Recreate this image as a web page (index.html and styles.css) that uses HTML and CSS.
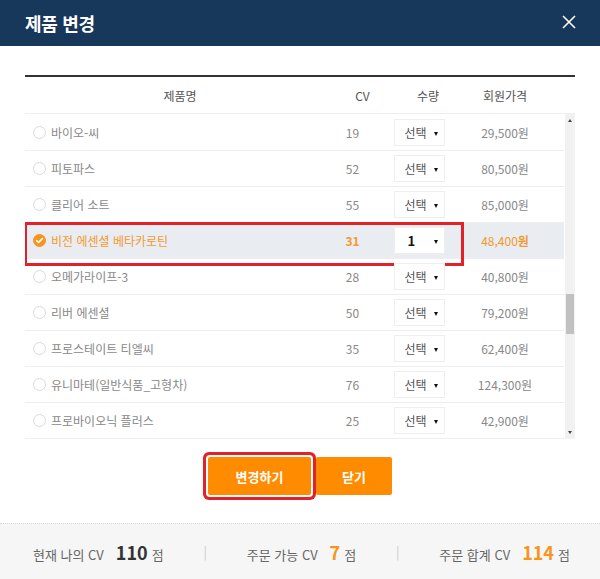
FILE: index.html
```html
<!DOCTYPE html>
<html lang="ko">
<head>
<meta charset="utf-8">
<title>제품 변경</title>
<link rel="stylesheet" href="styles.css">
</head>
<body>
<div class="modal">
  <header class="modal-head">
    <h1 class="modal-title">제품 변경</h1>
    <button class="close" aria-label="닫기">
      <svg width="14" height="14" viewBox="0 0 14 14"><path d="M1 1L13 13M13 1L1 13" stroke="#fff" stroke-width="1.6" fill="none"/></svg>
    </button>
  </header>
  <div class="modal-body">
    <div class="table">
      <div class="thead">
        <span>제품명</span><span>CV</span><span>수량</span><span>회원가격</span>
      </div>
      <div class="tbody">
        <div class="list">
          <div class="row"><span class="name"><i class="radio"></i>바이오-씨</span><span class="cv">19</span><span class="qty"><span class="select">선택<i class="caret"></i></span></span><span class="price">29,500원</span></div>
          <div class="row"><span class="name"><i class="radio"></i>피토파스</span><span class="cv">52</span><span class="qty"><span class="select">선택<i class="caret"></i></span></span><span class="price">80,500원</span></div>
          <div class="row"><span class="name"><i class="radio"></i>클리어 소트</span><span class="cv">55</span><span class="qty"><span class="select">선택<i class="caret"></i></span></span><span class="price">85,000원</span></div>
          <div class="row selected"><span class="name"><i class="radio checked"><svg width="13" height="13" viewBox="0 0 13 13"><path d="M3.6 6.6L5.6 8.5L9.4 4.6" stroke="#fff" stroke-width="1.6" fill="none" stroke-linecap="round" stroke-linejoin="round"/></svg></i>비전 에센셜 베타카로틴</span><span class="cv">31</span><span class="qty"><span class="select value">1<i class="caret"></i></span></span><span class="price">48,400<b>원</b></span></div>
          <div class="row"><span class="name"><i class="radio"></i>오메가라이프-3</span><span class="cv">28</span><span class="qty"><span class="select">선택<i class="caret"></i></span></span><span class="price">40,800원</span></div>
          <div class="row"><span class="name"><i class="radio"></i>리버 에센셜</span><span class="cv">50</span><span class="qty"><span class="select">선택<i class="caret"></i></span></span><span class="price">79,200원</span></div>
          <div class="row"><span class="name"><i class="radio"></i>프로스테이트 티엘씨</span><span class="cv">35</span><span class="qty"><span class="select">선택<i class="caret"></i></span></span><span class="price">62,400원</span></div>
          <div class="row"><span class="name"><i class="radio"></i>유니마테(일반식품_고형차)</span><span class="cv">76</span><span class="qty"><span class="select">선택<i class="caret"></i></span></span><span class="price">124,300원</span></div>
          <div class="row"><span class="name"><i class="radio"></i>프로바이오닉 플러스</span><span class="cv">25</span><span class="qty"><span class="select">선택<i class="caret"></i></span></span><span class="price">42,900원</span></div>
        </div>
        <div class="scrollbar">
          <i class="arrow up"></i>
          <div class="track"><div class="thumb"></div></div>
          <i class="arrow down"></i>
        </div>
      </div>
    </div>
    <div class="actions">
      <button class="btn btn-primary">변경하기</button>
      <button class="btn">닫기</button>
    </div>
  </div>
  <footer class="summary">
    <div class="stat"><span class="label">현재 나의 CV</span><strong class="num">110</strong><span class="unit">점</span></div>
    <span class="sep">|</span>
    <div class="stat"><span class="label">주문 가능 CV</span><strong class="num accent">7</strong><span class="unit">점</span></div>
    <span class="sep">|</span>
    <div class="stat"><span class="label">주문 합계 CV</span><strong class="num accent">114</strong><span class="unit">점</span></div>
  </footer>
</div>
</body>
</html>
```

FILE: styles.css
```css
* { box-sizing: border-box; }
html, body {
  margin: 0;
  padding: 0;
  background: #fff;
  font-family: "Noto Sans CJK KR", "Noto Sans", sans-serif;
}
.modal {
  width: 600px;
  height: 579px;
  display: flex;
  flex-direction: column;
  overflow: hidden;
}
.modal-head {
  height: 46px;
  background: #17375b;
  display: flex;
  align-items: center;
  justify-content: space-between;
  padding: 0 24px 0 25px;
  flex: none;
}
.modal-title {
  margin: 0;
  color: #fff;
  font-size: 18px;
  font-weight: 700;
  letter-spacing: -0.3px;
}
.close {
  background: none;
  border: 0;
  padding: 0;
  width: 14px;
  height: 14px;
  display: flex;
  margin-top: -2px;
}
.modal-body {
  padding: 29px 25px 0;
  flex: none;
}
.table {
  border-top: 2px solid #333;
}
.thead {
  display: grid;
  grid-template-columns: 310px 55px 76px 78px 1fr;
  height: 37px;
  align-items: center;
  border-bottom: 1px solid #eee;
  font-size: 12px;
  color: #555;
}
.thead span { text-align: center; }
.tbody {
  display: flex;
  height: 325px;
  gap: 1px;
}
.list {
  width: 539px;
  overflow: hidden;
  padding-top: 1px;
}
.row {
  position: relative;
  display: grid;
  grid-template-columns: 295px 65px 68px 104px 1fr;
  height: 36px;
  align-items: center;
  border-bottom: 1px solid #eee;
  font-size: 12px;
  color: #888;
}
.row .name {
  display: flex;
  align-items: center;
  gap: 5px;
  padding-left: 8px;
}
.row .cv, .row .price { text-align: center; }
.row .qty { display: flex; justify-content: center; }
.radio {
  width: 13px;
  height: 13px;
  border-radius: 50%;
  border: 1px solid #dadada;
  background: #fff;
  display: inline-flex;
  flex: none;
}
.radio.checked {
  background: #f7941d;
  border-color: #f7941d;
  align-items: center;
  justify-content: center;
}
.radio.checked svg { margin: -1px; }
.select {
  width: 51px;
  height: 27px;
  border: 1px solid #eee;
  background: #fff;
  display: flex;
  align-items: center;
  padding-left: 10px;
  color: #555;
  font-size: 12px;
  position: relative;
}
.caret {
  position: absolute;
  right: 6px;
  top: 12px;
  border-left: 2.5px solid transparent;
  border-right: 2.5px solid transparent;
  border-top: 4px solid #111;
}
.row.selected {
  background: #e9ecf1;
  color: #f39a2e;
}
.row.selected::after {
  content: "";
  position: absolute;
  left: -1px;
  top: -1px;
  width: 434px;
  height: 38px;
  border: 3px solid #e2212b;
}
.row.selected .cv { font-weight: 700; }
.row.selected .price b { font-weight: 700; }
.select.value {
  color: #111;
  font-weight: 700;
  font-size: 13px;
  padding-left: 13px;
}
.scrollbar {
  width: 10px;
  background: #f1f1f1;
  display: flex;
  flex-direction: column;
  align-items: center;
}
.arrow {
  flex: none;
  width: 0;
  height: 0;
  border-left: 2.5px solid transparent;
  border-right: 2.5px solid transparent;
}
.arrow.up { border-bottom: 3px solid #444; margin: 5px 0 6px; }
.arrow.down { border-top: 3px solid #444; margin: 6px 0 5px; }
.track {
  flex: 1;
  width: 100%;
  padding-top: 166px;
  display: flex;
  justify-content: center;
}
.thumb {
  width: 8px;
  height: 40px;
  background: #c1c1c1;
}
.actions {
  display: flex;
  justify-content: center;
  gap: 5px;
  margin-top: 18px;
}
.btn {
  height: 38px;
  width: 76px;
  border: 0;
  border-radius: 2px;
  background: #ff8c00;
  color: #fff;
  font-family: inherit;
  font-size: 13px;
  font-weight: 700;
  padding: 0;
}
.btn-primary {
  width: 103px;
  box-shadow: 0 0 0 2px #fff, 0 0 0 5px #e2212b;
}
.summary {
  margin-top: 28px;
  flex: 1;
  background: #f6f6f6;
  border-top: 1px dotted #d8d8d8;
  display: flex;
  align-items: center;
  justify-content: space-between;
  padding: 0 30px 0 33px;
}
.stat {
  display: flex;
  align-items: baseline;
}
.label {
  font-size: 13px;
  color: #666;
}
.num {
  font-size: 18px;
  font-weight: 700;
  color: #333;
  margin-left: 12px;
  margin-right: 4px;
}
.num.accent { color: #f7941d; }
.unit {
  font-size: 13px;
  color: #666;
}
.sep {
  color: #ccc;
  font-size: 13px;
}
```
